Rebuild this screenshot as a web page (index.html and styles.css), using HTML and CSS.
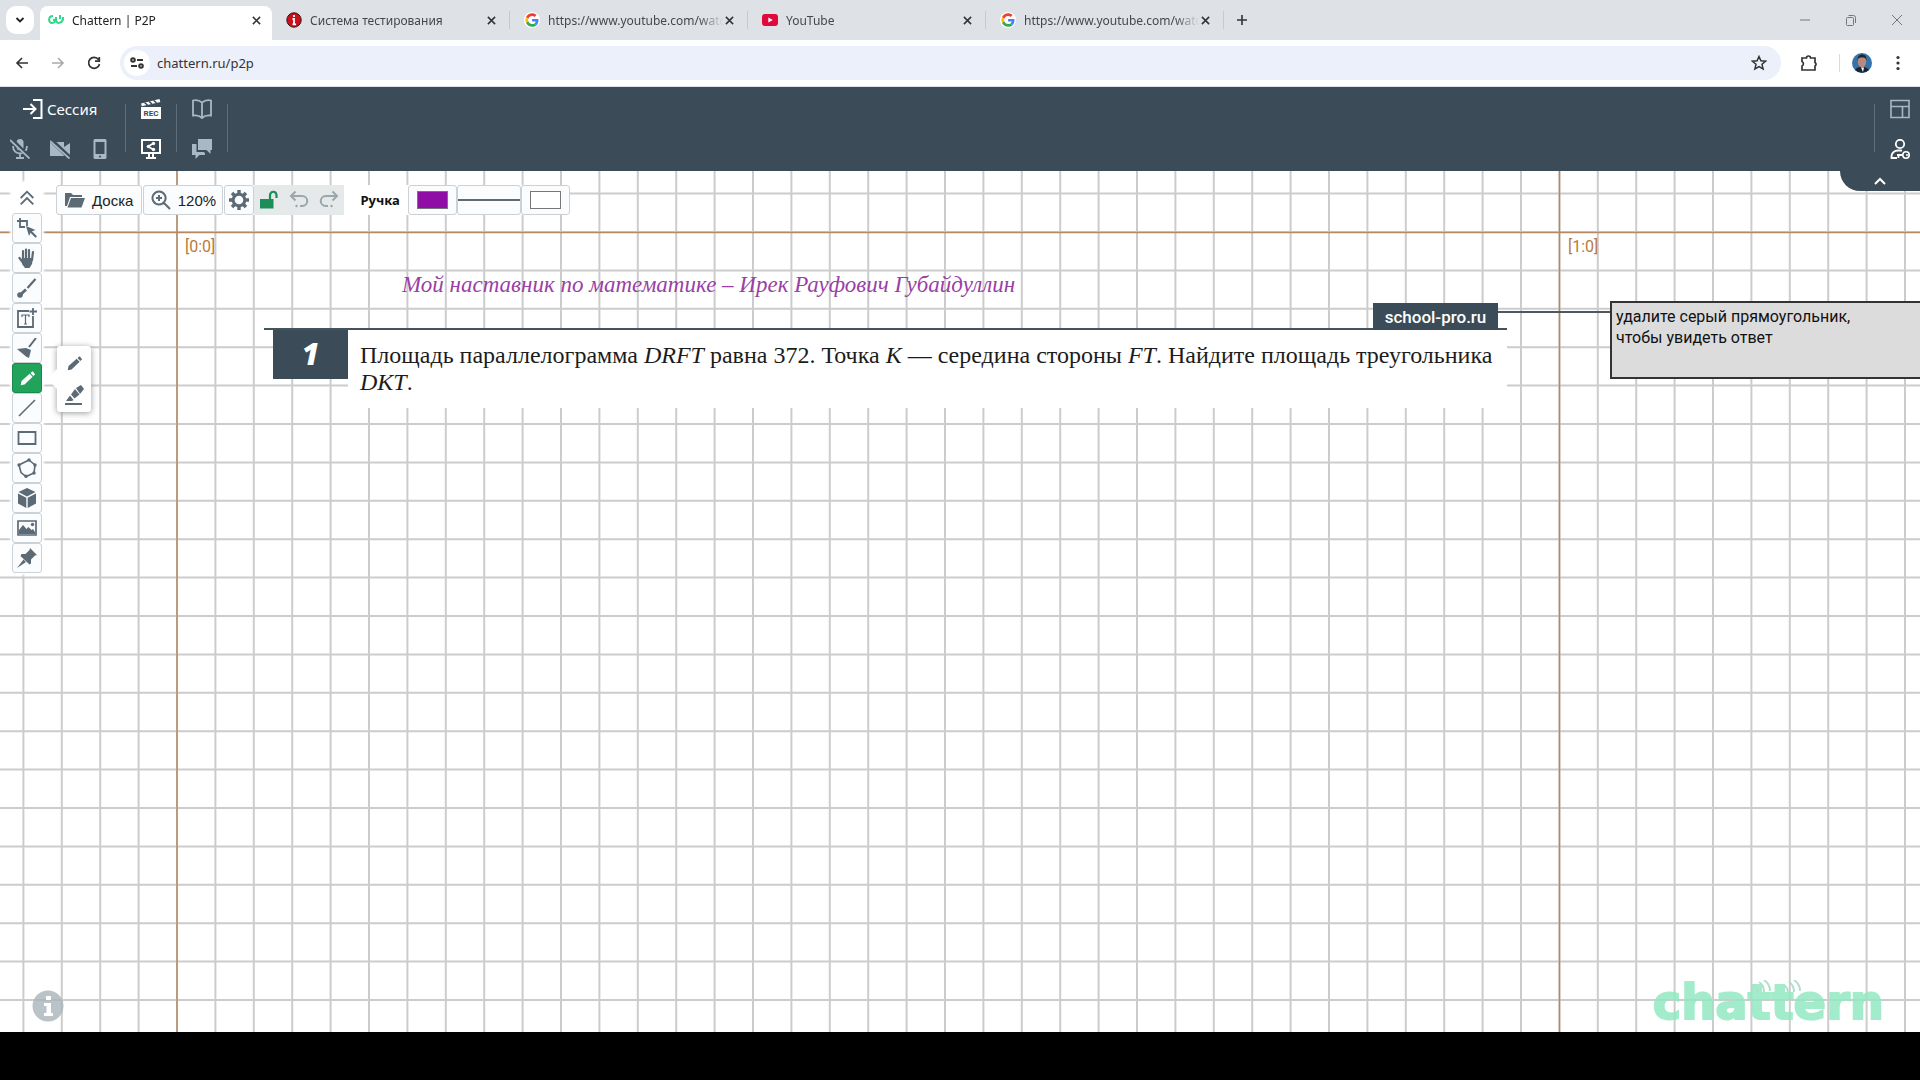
FILE: index.html
```html
<!DOCTYPE html>
<html lang="ru">
<head>
<meta charset="utf-8">
<title>Chattern | P2P</title>
<link rel="stylesheet" href="styles.css">
</head>
<body>
<svg class="defs" aria-hidden="true">
  <symbol id="x" viewBox="0 0 10 10"><path d="M1 1l8 8M9 1L1 9" fill="none" stroke="currentColor" stroke-width="1.7"/></symbol>
  <symbol id="google" viewBox="0 0 48 48"><circle cx="24" cy="24" r="24" fill="#fff"/><g transform="translate(4 4) scale(.84)"><path fill="#ea4335" d="M24 9.5c3.5 0 6.700 1.200 9.200 3.600l6.900-6.900C35.900 2.400 30.500 0 24 0 14.600 0 6.500 5.400 2.600 13.200l8 6.200C12.400 13.700 17.700 9.500 24 9.500z"/><path fill="#4285f4" d="M47 24.500c0-1.600-.2-3.100-.4-4.500H24v9h12.900c-.6 3-2.200 5.500-4.700 7.200l7.700 6C44.400 38 47 31.800 47 24.500z"/><path fill="#fbbc05" d="M10.500 28.600a14.500 14.500 0 0 1 0-9.200l-8-6.200a24 24 0 0 0 0 21.600z"/><path fill="#34a853" d="M24 48c6.500 0 11.900-2.100 15.900-5.800l-7.700-6c-2.200 1.400-4.900 2.300-8.200 2.300-6.300 0-11.600-4.200-13.500-9.900l-8 6.200C6.500 42.600 14.600 48 24 48z"/></g></symbol>
</svg>

<div class="browser">
  <div class="tabs">
    <button class="tab-search" aria-label="Поиск вкладок"><svg width="10" height="10" viewBox="0 0 10 10"><path d="M1.500 3l3.500 3.500L8.500 3" fill="none" stroke="#222" stroke-width="1.800"/></svg></button>
    <div class="tab active"><svg class="fav" viewBox="0 0 16 16"><path d="M5 4C0 4 0 11 4 11c2 0 4-2 4-6M5 8h2M8 5v3c0 4 6 4 7-1V5M12 3v4" fill="none" stroke="#2fd98a" stroke-width="2"/></svg><a class="tab-title" href="#p2p">Chattern | P2P</a><button class="close" aria-label="Закрыть"><svg><use href="#x"/></svg></button></div>
    <div class="tab"><svg class="fav" viewBox="0 0 16 16"><circle cx="8" cy="8" r="7.200" fill="#c9101c" stroke="#3a1014"/><path d="M8 3v2M6.500 7H8v5M6.500 12.300h3.500" stroke="#fff" stroke-width="1.800" fill="none"/></svg><a class="tab-title" href="#test">Система тестирования</a><button class="close" aria-label="Закрыть"><svg><use href="#x"/></svg></button></div>
    <div class="tab"><svg class="fav"><use href="#google"/></svg><a class="tab-title" href="#w1">https://www.youtube.com/watc</a><button class="close" aria-label="Закрыть"><svg><use href="#x"/></svg></button></div>
    <div class="tab"><svg class="fav" viewBox="0 0 16 16"><rect y="2" width="16" height="12" rx="3" fill="#e0093b"/><path d="M6.300 5.500l4.500 2.500-4.500 2.500z" fill="#fff"/></svg><a class="tab-title" href="#yt">YouTube</a><button class="close" aria-label="Закрыть"><svg><use href="#x"/></svg></button></div>
    <div class="tab"><svg class="fav"><use href="#google"/></svg><a class="tab-title" href="#w2">https://www.youtube.com/watc</a><button class="close" aria-label="Закрыть"><svg><use href="#x"/></svg></button></div>
    <button class="new-tab" aria-label="Новая вкладка"><svg width="12" height="12" viewBox="0 0 12 12"><path d="M6 1v10M1 6h10" stroke="#333" stroke-width="1.600"/></svg></button>
    <div class="win">
      <button aria-label="Свернуть"><svg viewBox="0 0 12 12"><path d="M1 6h10" stroke="#777"/></svg></button>
      <button aria-label="Окно"><svg viewBox="0 0 12 12"><path d="M1.500 4.500a1 1 0 0 1 1-1h5a1 1 0 0 1 1 1v6a1 1 0 0 1-1 1h-5a1 1 0 0 1-1-1zM3.500 1.500h5a2 2 0 0 1 2 2v5.500" fill="none" stroke="#777"/></svg></button>
      <button aria-label="Закрыть окно"><svg viewBox="0 0 12 12"><path d="M1 1l10 10M11 1L1 11" stroke="#777"/></svg></button>
    </div>
  </div>
  <div class="nav">
    <button aria-label="Назад"><svg viewBox="0 0 16 16"><path d="M14 8H3M8 3L3 8l5 5" fill="none" stroke="#333" stroke-width="1.600"/></svg></button>
    <button aria-label="Вперёд"><svg viewBox="0 0 16 16"><path d="M2 8h11M8 3l5 5-5 5" fill="none" stroke="#aaa" stroke-width="1.600"/></svg></button>
    <button aria-label="Обновить"><svg viewBox="0 0 16 16"><path d="M12.500 4.500A5.500 5.500 0 1 0 13.500 9M13.300 2v4.200H9" fill="none" stroke="#333" stroke-width="1.700"/></svg></button>
    <div class="omnibox">
      <span class="site"><svg width="14" height="14" viewBox="0 0 14 14"><circle cx="3" cy="4" r="1.800"/><path d="M7 4h6M1 10h6"/><circle cx="11" cy="10" r="1.800"/></svg></span>
      <input aria-label="Адрес" value="chattern.ru/p2p">
      <button aria-label="В закладки"><svg viewBox="0 0 16 16"><path d="M8 1.500l1.900 4.300 4.700.4-3.600 3.100 1.100 4.600L8 11.500l-4.100 2.400L5 9.300 1.400 6.200l4.700-.4z" fill="none" stroke="#333" stroke-width="1.500"/></svg></button>
    </div>
    <button class="ext" aria-label="Расширения"><svg viewBox="0 0 18 18"><path d="M2 4h4.500a2 2 0 0 1 4 0H15v4.500a2 2 0 0 1 0 3.500v4H2v-4a2.500 2.500 0 0 0 0-4.500z" fill="none" stroke="#333" stroke-width="1.700"/></svg></button>
    <i class="nav-sep"></i>
    <button class="avatar" aria-label="Профиль"><svg viewBox="0 0 20 20"><circle cx="10" cy="10" r="10" fill="#3573a8"/><path d="M3 17c2-3 4-3 7-3s6 1 7 3a10 10 0 0 1-14 0z" fill="#1b2430"/><ellipse cx="10" cy="8.500" rx="4.200" ry="6" fill="#b98a7c"/><path d="M5.500 8C5 3 8 1.500 10 1.500s5 1 4.500 6.500C14 4.500 12 4.500 10 4.500S6 4.500 5.500 8z" fill="#24242b"/><path d="M9 14.500h3L11 19z" fill="#fff"/></svg></button>
    <button class="dots" aria-label="Меню"><svg viewBox="0 0 16 16" fill="#333"><circle cx="8" cy="2.500" r="1.600"/><circle cx="8" cy="8" r="1.600"/><circle cx="8" cy="13.500" r="1.600"/></svg></button>
  </div>
</div>

<header class="bar">
  <div class="group session">
    <button class="row wide"><svg viewBox="0 0 20 20"><path d="M10 1h8.500v18H10M0 10h12M7.500 5l5 5-5 5" fill="none" stroke="#fff" stroke-width="2"/></svg>Сессия</button>
    <div class="row">
      <button class="dim" aria-label="Микрофон"><svg viewBox="0 0 20 20"><rect x="6.500" width="7" height="11.500" rx="3.500" fill="currentColor"/><path d="M3 7c0 10 14 10 14 0M10 14v5M6 19h8" fill="none" stroke="currentColor" stroke-width="1.800"/><path d="M1 0l19 19" stroke="#3b4c58" stroke-width="4"/><path d="M0 1l19.500 18.500" stroke="currentColor" stroke-width="1.800"/></svg></button>
      <button class="dim" aria-label="Камера"><svg viewBox="0 0 20 20"><path d="M0 3h14v5l6-4v12l-6-4v5H0z" fill="currentColor"/><path d="M1 1l19 18" stroke="#3b4c58" stroke-width="4.500"/><path d="M0 2l19.500 17.500" stroke="currentColor" stroke-width="1.900"/></svg></button>
      <button class="dim" aria-label="Телефон"><svg viewBox="0 0 20 20"><path fill-rule="evenodd" d="M5 0h10a1.500 1.500 0 0 1 1.500 1.500v17A1.500 1.500 0 0 1 15 20H5a1.500 1.500 0 0 1-1.500-1.500v-17A1.500 1.500 0 0 1 5 0zM5.500 3v12h9V3zM10 16.500a1 1 0 1 0 .1 0z" fill="currentColor"/></svg></button>
    </div>
  </div>
  <div class="group">
    <button aria-label="Запись"><svg viewBox="0 0 20 20"><path d="M0 4.500L18.500 0l.8 3L.8 7.200zM0 8h20v12H0z" fill="#fff"/><path d="M3.500 3.500l3 2.600M8 2.400L11 5M12.500 1.300l3 2.600" stroke="#3b4c58" stroke-width="1.400"/><text x="10" y="17" class="rec">REC</text></svg></button>
    <button aria-label="Демонстрация"><svg viewBox="0 0 20 20"><path d="M1 1h18v13H1zM5 19h10M8 14v5M12 14v5" fill="none" stroke="#fff" stroke-width="2"/><path d="M13 4L7 7.500l6 3.500" fill="none" stroke="#fff" stroke-width="1.600"/><g fill="#fff"><circle cx="12.500" cy="4.500" r="1.700"/><circle cx="7.500" cy="7.500" r="1.700"/><circle cx="12.500" cy="10.500" r="1.700"/></g></svg></button>
  </div>
  <div class="group">
    <button class="dim" aria-label="Учебник"><svg viewBox="0 0 20 20"><path d="M10 3.500C7 1 3 1 1 1.500v15c3-.5 6-.5 9 2.500 3-3 6-3 9-2.500v-15c-2-.5-6-.5-9 2zM10 3.500V19" fill="none" stroke="currentColor" stroke-width="1.800"/></svg></button>
    <button class="dim" aria-label="Чат"><svg viewBox="0 0 20 20" fill="currentColor"><path d="M6 0h14v11h-1.500v4l-4-4H6z"/><path d="M0 5h4.500v8H12l1 1.500v1.500H7.500L3.500 20v-4H0z"/></svg></button>
  </div>
  <div class="group right">
    <button class="dim" aria-label="Макет"><svg viewBox="0 0 20 20"><path d="M1 1.500h18v17H1zM1 7.500h18M12.500 7.500v11" fill="none" stroke="currentColor" stroke-width="1.600"/></svg></button>
    <button aria-label="Доступ"><svg viewBox="0 0 20 20"><circle cx="10" cy="5" r="4.200" fill="none" stroke="#fff" stroke-width="1.800"/><path d="M7 19H1.500C1 13.500 5 11.500 8 11.500h4" fill="none" stroke="#fff" stroke-width="1.800"/><path d="M7 16h6M8.500 16v3" stroke="#fff" stroke-width="1.800"/><circle cx="16" cy="16" r="3.200" fill="none" stroke="#fff" stroke-width="1.600"/><circle cx="17" cy="16" r="1" fill="#fff"/></svg></button>
  </div>
</header>

<main class="board">
  <svg class="grid" aria-hidden="true">
    <pattern id="cells" x="177" y="61" width="192" height="192" patternUnits="userSpaceOnUse">
      <path d="M0 0v192M192 0v192M38.400 0v192M76.800 0v192M115.200 0v192M153.600 0v192M0 0h192M0 192h192M0 38.400h192M0 76.800h192M0 115.200h192M0 153.600h192" stroke="#ccc" stroke-width="2"/>
    </pattern>
    <rect width="100%" height="100%" fill="url(#cells)"/>
    <path d="M0 61.500h4000M177 0v3000M1559.500 0v3000" stroke="#b58a63" stroke-width="1.500"/>
  </svg>

  <span class="coord c0">[0:0]</span>
  <span class="coord c1">[1:0]</span>
  <p class="motto">Мой наставник по математике – Ирек Рауфович Губайдуллин</p>
  <article class="task">
    <span class="num">1</span>
    <p>Площадь параллелограмма <i>DRFT</i> равна 372. Точка <i>K</i> — середина стороны <i>FT</i>. Найдите площадь треугольника <i>DKT</i>.</p>
    <span class="brand">school-pro.ru</span>
  </article>
  <i class="link-line"></i>
  <div class="note">удалите серый прямоугольник,<br>чтобы увидеть ответ</div>

  <button class="fold" aria-label="Свернуть панель"><svg width="12" height="8" viewBox="0 0 12 8"><path d="M1 7l5-5 5 5" fill="none" stroke="#fff" stroke-width="2"/></svg></button>

  <div class="topbar">
    <button class="tb"><svg viewBox="0 0 20 20"><path d="M0 3h6l2 2h9v2H5L2 16H0z"/><path d="M6 8h14l-3.500 9.500H2.500z"/></svg>Доска</button>
    <button class="tb zoom"><svg viewBox="0 0 20 20"><path d="M8 1.500a6.500 6.500 0 1 0 .1 0zM13 13l6 6M8 5v6M5 8h6" fill="none" stroke="#5b6a75" stroke-width="2"/></svg>120%</button>
    <button class="tb gear" aria-label="Настройки"><svg viewBox="0 0 20 20"><circle cx="10" cy="10" r="5.800" fill="none" stroke="#5b6a75" stroke-width="3"/><path d="M10 0v4M10 16v4M0 10h4M16 10h4M3 3l2.800 2.800M14.200 14.200L17 17M17 3l-2.800 2.800M5.800 14.200L3 17" stroke="#5b6a75" stroke-width="3.400"/></svg></button>
    <div class="hist">
      <button aria-label="Замок"><svg viewBox="0 0 20 20"><path d="M1 9h13.500v9.500H1z" fill="#1c8e58"/><path d="M11 9V5.500c0-5 6.500-5 6.500 0V8" fill="none" stroke="#1c8e58" stroke-width="2.200"/></svg></button>
      <button aria-label="Отменить"><svg viewBox="0 0 20 20"><path d="M6.500 1.500L2 6l4.500 4.500M2 6h11c7 0 7 10 0 10h-2" fill="none" stroke="#9aa6ab" stroke-width="2"/><circle cx="7.500" cy="16" r="1.200" fill="#9aa6ab"/></svg></button>
      <button aria-label="Вернуть"><svg viewBox="0 0 20 20"><path d="M13.500 1.500L18 6l-4.500 4.500M18 6H7c-7 0-7 10 0 10h2" fill="none" stroke="#9aa6ab" stroke-width="2"/><circle cx="12.500" cy="16" r="1.200" fill="#9aa6ab"/></svg></button>
    </div>
    <b class="tool-name">Ручка</b>
    <button class="tb swatch" aria-label="Цвет"><i class="fill"></i></button>
    <button class="tb stroke" aria-label="Толщина"><i></i></button>
    <button class="tb swatch" aria-label="Заливка"><i></i></button>
  </div>

  <div class="tools">
    <button class="up" aria-label="Свернуть"><svg viewBox="0 0 20 20"><path d="M3 10l7-7 7 7M3 17l7-7 7 7" fill="none" stroke="#5b6a75" stroke-width="2"/></svg></button>
    <button aria-label="Выделение"><svg viewBox="0 0 20 20"><path d="M3 0v9h5M0 3h10v5" fill="none" stroke="#5b6a75" stroke-width="1.800"/><path d="M9 8l9.500 4-3.500 1.300 5 5-1.500 1.500-5-5-1.500 3.200z"/></svg></button>
    <button aria-label="Рука"><svg viewBox="0 0 20 20"><path d="M6 12V3M9 11V1.500M12 11V2M15 12l1-8M7 16L2.500 10" fill="none" stroke="#5b6a75" stroke-width="2.200" stroke-linecap="round"/><path d="M5 10h11l-1 6-2.500 4H8l-3-4z"/></svg></button>
    <button aria-label="Указка"><svg viewBox="0 0 20 20"><path d="M2.500 17.500l6.500-6" stroke="#5b6a75" stroke-width="3"/><circle cx="3" cy="17" r="2.800"/><path d="M10.500 10L18.500 1" stroke="#5b6a75" stroke-width="2.200"/></svg></button>
    <button aria-label="Текст"><svg viewBox="0 0 20 20"><path d="M12 3H1v16h15V8M16 0v7M12.500 3.500H20" fill="none" stroke="#5b6a75" stroke-width="1.800"/><path d="M5 9V7h7v2M8.500 7v9M7 16h3" fill="none" stroke="#5b6a75" stroke-width="1.200"/></svg></button>
    <button aria-label="Очистить"><svg viewBox="0 0 20 20"><path d="M19 0l-7 9" stroke="#5b6a75" stroke-width="2"/><path d="M0 11l9-1 5 2-2 8-3-1.500z"/></svg></button>
    <button class="on" aria-label="Ручка"><svg viewBox="0 0 20 20"><path d="M2 18l1-5L12.500 4.500l3.500 3.500L6.500 17zM13.500 3.500L16 1.500 19 5l-2.200 2z"/></svg></button>
    <button aria-label="Линия"><svg viewBox="0 0 20 20"><path d="M2 18L18 2" stroke="#5b6a75" stroke-width="1.600"/></svg></button>
    <button aria-label="Прямоугольник"><svg viewBox="0 0 20 20"><path d="M1.500 4h17v12h-17z" fill="none" stroke="#5b6a75" stroke-width="1.800"/></svg></button>
    <button aria-label="Многоугольник"><svg viewBox="0 0 20 20"><path d="M12 2l6 5-1 8-8 3.500-5-4L2 7z" fill="none" stroke="#5b6a75" stroke-width="1.600"/><circle cx="12" cy="2" r="1.700"/><circle cx="18" cy="7" r="1.700"/><circle cx="17" cy="15" r="1.700"/><circle cx="9" cy="18.300" r="1.700"/><circle cx="2" cy="7" r="1.700"/></svg></button>
    <button aria-label="Куб"><svg viewBox="0 0 20 20"><path d="M10 0l8.500 4L10 8.500 1.500 4zM1 5.500l8.300 4.300V20L1 15.500zM19 5.500l-8.300 4.300V20L19 15.500z"/></svg></button>
    <button aria-label="Картинка"><svg viewBox="0 0 20 20"><path d="M1 3h18v14H1z" fill="none" stroke="#5b6a75" stroke-width="1.700"/><path d="M2 16v-4l4-5 3.500 4 2-2 3 3 1.500-1 2 3v2z"/><circle cx="15.500" cy="6.500" r="1.700"/></svg></button>
    <button aria-label="Закрепить"><svg viewBox="0 0 20 20"><path d="M13 0l7 7-2 .5-4 4 0 4-1.500 1L3.500 8l1-2h4l4-4zM6.500 11.500L9 14l-9 6z"/></svg></button>
  </div>

  <div class="flyout">
    <button aria-label="Карандаш"><svg viewBox="0 0 20 20"><path d="M2 18l1-5L12.500 4.500l3.500 3.500L6.500 17zM13.500 3.500L16 1.500 19 5l-2.200 2z"/></svg></button>
    <button aria-label="Маркер"><svg viewBox="0 0 20 20"><path d="M12 3l5-3 3 4-4 5zM11 4l4.500 5.500-5 4-3.500-4zM6 10.500L9.500 15 8 16H2z"/><path d="M1 19h17" stroke="#5b6a75" stroke-width="2"/></svg></button>
  </div>

  <button class="info" aria-label="Справка"><svg width="32" height="32" viewBox="0 0 32 32"><circle cx="16" cy="16" r="15.500" fill="#a9b4ba" opacity=".8"/><path d="M14 6h5v4h-5zM12 13h7v10h2v3h-9v-3h2.500v-7H12z" fill="#fff"/></svg></button>
  <div class="logo">chattern<svg width="56" height="14" viewBox="0 0 56 14"><path d="M2 5q4 1 5 7M8 2q5 3 5 10M13 0q6 4 6 11M32 5q4 1 5 7M38 2q5 3 5 10M43 0q6 4 6 11" fill="none" stroke="#a6d9c4" stroke-width="2"/></svg></div>
</main>
<footer class="strip"></footer>
</body>
</html>
```
FILE: styles.css
```css
* { box-sizing: border-box; }
body { margin: 0; min-height: 100vh; display: flex; flex-direction: column; font-family: "Open Sans", sans-serif; background: #fff; }
button { border: 0; padding: 0; margin: 0; background: none; font: inherit; color: inherit; display: flex; align-items: center; justify-content: center; flex: none; }
svg { display: block; flex: none; }
.defs { position: absolute; width: 0; height: 0; }

/* browser frame */
.browser { border-bottom: 1px solid #dde3e8; }
.tabs { display: flex; height: 40px; padding-left: 6px; background: #dee1e5; font-family: "Noto Sans", sans-serif; font-size: 12px; color: #44484c; }
.tab-search { width: 28px; height: 28px; margin: 6px 6px 0 0; border-radius: 10px; background: #fff; }
.tab { display: flex; align-items: center; width: 238px; height: 18px; margin-top: 11px; padding: 0 12px 0 14px; border-right: 1px solid #c6c9cd; }
.tab.active { width: 232px; height: 34px; margin-top: 6px; padding: 0 10px 6px 8px; border: 0; background: #fff; border-radius: 8px 8px 0 0; color: #222; }
.fav { width: 16px; height: 16px; margin-right: 8px; }
.tab-title { flex: 1; min-width: 0; overflow: hidden; white-space: nowrap; color: inherit; text-decoration: none; -webkit-mask-image: linear-gradient(to left, transparent, #000 24px); mask-image: linear-gradient(to left, transparent, #000 24px); }
.close { width: 12px; height: 16px; color: #333; }
.close svg { width: 9px; height: 9px; }
.new-tab { width: 36px; height: 40px; }
.win { display: flex; margin-left: auto; }
.win button { width: 46px; height: 40px; }
.win svg { width: 12px; height: 12px; }
.nav { display: flex; align-items: center; height: 46px; padding: 0 8px; }
.nav > button { width: 36px; height: 34px; margin-left: -4px; }
.nav > button + button { margin-left: 0; }
.nav > button svg { width: 16px; height: 16px; }
.omnibox { flex: 1; display: flex; align-items: center; height: 34px; margin: 0 14px 0 8px; padding: 0 14px 0 4px; border-radius: 17px; background: #ecf0fa; }
.site { display: flex; align-items: center; justify-content: center; width: 26px; height: 26px; border-radius: 13px; background: #fff; }
.site svg { fill: none; stroke: #333; stroke-width: 2; }
.omnibox input { flex: 1; border: 0; padding: 0; margin-left: 7px; background: none; font: 13px "Noto Sans", sans-serif; color: #333; outline: none; }
.omnibox button svg { width: 16px; height: 16px; }
.nav .ext svg { width: 18px; height: 18px; }
.nav-sep { width: 1px; height: 18px; margin: 0 12px; background: #d5d9e0; }
.nav .avatar { width: 28px; }
.nav .avatar svg { width: 20px; height: 20px; }
.nav .dots { width: 44px; margin-right: -8px; }

/* session header */
.bar { display: flex; height: 84px; padding: 12px 0 0; background: #3b4c58; color: #fff; }
.group { display: flex; flex-direction: column; gap: 20px; width: 51px; height: 60px; padding-left: 16px; align-items: flex-start; }
.group + .group { background: linear-gradient(#5f6f79, #5f6f79) 0 5px / 1px 48px no-repeat; }
.group:nth-child(3) { background: linear-gradient(#5f6f79, #5f6f79) 0 5px / 1px 48px no-repeat, linear-gradient(#5f6f79, #5f6f79) 100% 5px / 1px 48px no-repeat; }
.group:nth-child(3) { width: 52px; }
.group svg { width: 20px; height: 20px; }
.session { width: 125px; padding-left: 10px; }
.row { display: flex; gap: 20px; height: 20px; }
.row.wide { gap: 4px; margin-left: 13px; font-size: 15px; font-family: "Noto Sans", sans-serif; }
.group.right { width: 46px; margin-left: auto; }
.dim { color: #a9b8c2; }
.rec { font: bold 8px "Roboto", sans-serif; fill: #3b4c58; text-anchor: middle; }

/* whiteboard */
.board { position: relative; flex: 1; min-height: 600px; overflow: hidden; }
.grid { position: absolute; inset: 0; width: 100%; height: 100%; }
.coord { position: absolute; top: 66px; font: 16px/20px "Roboto", sans-serif; color: #b9793c; }
.c0 { left: 185px; }
.c1 { left: 1568px; }
.motto { position: absolute; left: 402px; top: 98px; margin: 0; font: italic 23px/32px "Liberation Serif", serif; color: #9a3fa5; white-space: nowrap; }
.task { position: absolute; left: 264px; top: 157px; width: 1243px; height: 80px; padding-left: 9px; display: flex; border-top: 2px solid #44525b; }
.num { width: 75px; height: 49px; background: #3b4c58; color: #fff; font: italic 800 30px/48px "Open Sans", sans-serif; text-align: center; }
.task p { flex: 1; margin: 0; padding: 12px 0 0 12px; background: #fff; font: 24px/27px "Liberation Serif", serif; color: #1c1c1c; }
.brand { position: absolute; right: 9px; bottom: 78px; width: 125px; height: 27px; background: #3b4c58; color: #fff; font: 500 17px/28px "Roboto", sans-serif; text-align: center; }
.link-line { position: absolute; left: 1498px; top: 140px; width: 112px; height: 2px; background: #50565e; }
.note { position: absolute; left: 1610px; top: 130px; width: 330px; height: 78px; padding: 3px 4px; border: 2px solid #333; background: #dcdcdc; font: 16px/21px "Roboto", sans-serif; color: #111; }
.fold { position: absolute; right: 0; top: 0; width: 80px; height: 20px; border-radius: 0 0 0 20px; background: #3b4c58; }
.topbar { position: absolute; left: 56px; top: 14px; display: flex; align-items: center; height: 30px; font: 15px "Liberation Sans", sans-serif; color: #222; background: #fff; }
.tb { height: 30px; gap: 7px; padding: 0 8px; margin-right: 1px; border: 1px solid #ccd1d5; border-radius: 3px; background: #fafcfe; }
.tb.zoom { padding: 0 8px; }
.topbar svg, .tools svg, .flyout svg { width: 20px; height: 20px; fill: #5b6a75; }
.tb.zoom { width: 80px; }
.tb.gear { width: 30px; padding: 0; margin-right: 0; }
.hist { display: flex; align-items: center; gap: 10px; width: 90px; height: 30px; padding: 0 5px; background: #e5e9e9; }
.tool-name { width: 64px; padding-left: 16px; font: bold 13px "Noto Sans", sans-serif; color: #111; }
.swatch { width: 49px; margin: 0; }
.swatch i { width: 31px; height: 18px; border: 1px solid #777; background: #fff; flex: none; }
.swatch .fill { background: #8e0ea6; }
.stroke { width: 64px; margin: 0; padding: 0; }
.stroke i { width: 62px; height: 2px; background: #5b6a75; }
.tools { position: absolute; left: 12px; top: 12px; width: 30px; background: #fff; box-shadow: 0 0 2px 2px #fff; }
.tools button { width: 30px; height: 30px; border: 1px solid #ccd1d5; border-radius: 3px; background: #fafcfe; }
.tools .up { border: 0; background: #fff; }
.tools .up svg { width: 20px; height: 18px; }
.tools .on { background: #21a35c; border-color: #188a4b; }
.tools .on svg { fill: #fff; width: 17px; height: 17px; }
.flyout { position: absolute; left: 57px; top: 175px; width: 34px; padding: 2px; background: #fff; border-radius: 3px; box-shadow: 0 1px 6px #999; }
.flyout::before { content: ""; position: absolute; left: -10px; top: 23px; border: 10px solid transparent; border-width: 10px 10px 10px 0; border-right-color: #fff; }
.flyout button { width: 30px; height: 31px; }
.flyout button:first-child svg { width: 17px; height: 17px; }
.info { position: absolute; left: 32px; bottom: 10px; }
.logo { position: absolute; right: 36px; bottom: 7px; font: bold 48px/46px "DejaVu Sans", sans-serif; color: #93e9c2; -webkit-text-stroke: 2px #93e9c2; opacity: .85; }
.logo svg { position: absolute; left: 98px; top: 1px; }
.strip { height: 48px; background: #000; }
```
